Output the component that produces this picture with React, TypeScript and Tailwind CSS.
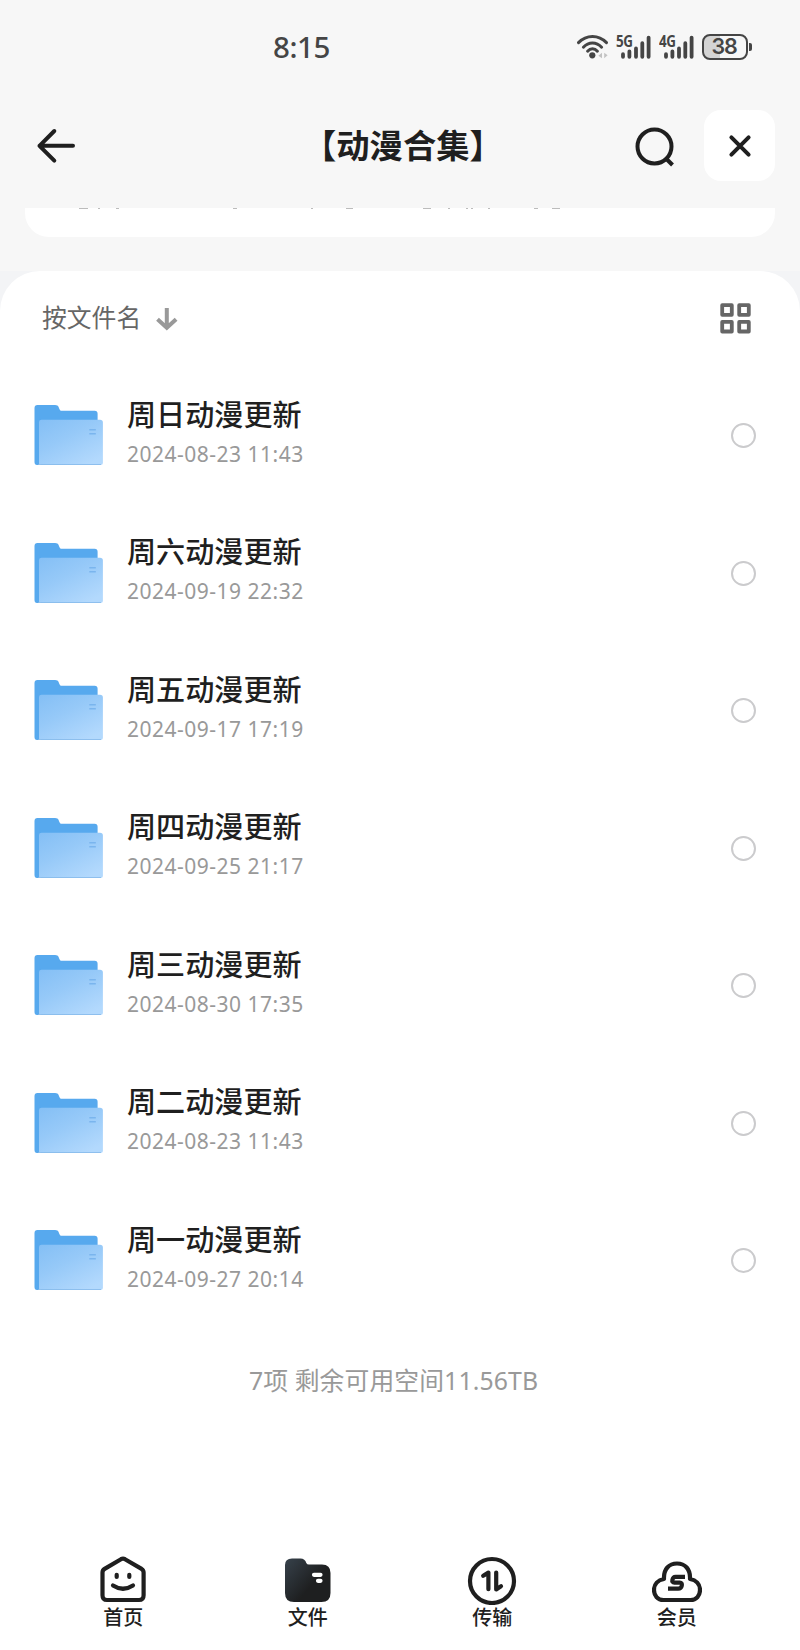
import React from "react";

const rows = [
  { name: "周日动漫更新", date: "2024-08-23 11:43" },
  { name: "周六动漫更新", date: "2024-09-19 22:32" },
  { name: "周五动漫更新", date: "2024-09-17 17:19" },
  { name: "周四动漫更新", date: "2024-09-25 21:17" },
  { name: "周三动漫更新", date: "2024-08-30 17:35" },
  { name: "周二动漫更新", date: "2024-08-23 11:43" },
  { name: "周一动漫更新", date: "2024-09-27 20:14" },
];

function Wifi() {
  return (
    <svg className="h-[26px] w-[34px] shrink-0" viewBox="0 0 34 26" fill="none" stroke="#454545" strokeWidth="3" strokeLinecap="round">
      <path d="M2.5 8.6C10.5 0.4 22.5 0.4 30.5 8.6" />
      <path d="M7.4 13.2C12.6 7.6 20.4 7.6 25.6 13.2" />
      <path d="M11.6 17.2C14.4 14 18.6 14 21.4 17.2" />
      <circle cx="16.3" cy="21.3" r="3.1" fill="#454545" stroke="none" />
      <path d="M26 18.8v5.4l-3.6-2.5zM28.2 18.8v5.4l3.4-3z" fill="#c2c2c2" stroke="none" />
    </svg>
  );
}

function Signal({ label }: { label: string }) {
  return (
    <div className="relative h-[26px] w-[36px] shrink-0">
      <svg className="h-[26px] w-[36px]" viewBox="0 0 36 26" stroke="#454545" strokeWidth="3.8" strokeLinecap="round">
        <path d="M7 20.2v2.6M13.4 17.4v5.4M20 14.4v8.4M26.3 9.2v13.6M32.6 3.6v19.2" />
      </svg>
      <span className="absolute left-0 top-0 origin-left scale-x-[0.84] font-['Noto_Sans'] text-[16px] font-bold leading-[15px] text-[#454545] tracking-[-0.4px]">{label}</span>
    </div>
  );
}

function Folder() {
  return (
    <svg className="mb-px h-[62px] w-[70px] shrink-0" viewBox="0 0 70 62">
      <defs>
        <linearGradient id="front" x1="0" y1="0" x2="0.75" y2="1">
          <stop offset="0" stopColor="#84bff5" />
          <stop offset="0.45" stopColor="#96c9f8" />
          <stop offset="1" stopColor="#b3d9fd" />
        </linearGradient>
      </defs>
      <path d="M0.5 4Q0.5 1 3.5 1H21C23 1 24.2 1.8 24.8 3.4L25.4 5C25.9 6.3 26.6 6.8 28 6.8H60.6Q63.6 6.8 63.6 9.8V50H10L5 61H3Q0.5 61 0.5 58Z" fill="#57a9ee" />
      <path d="M5 18Q5 15.8 7.5 15.8H66Q68.9 15.8 68.9 18.5V58.5Q68.9 61 66.4 61H7.5Q5 61 5 58.5Z" fill="url(#front)" />
      <path d="M4 60.5H67" stroke="#84b9ea" strokeWidth="0.8" />
      <path d="M55.3 25.8H61.8M55.3 29.8H61.8" stroke="#7ab5ee" strokeWidth="1.6" />
    </svg>
  );
}

const tabs = [
  {
    label: "首页",
    icon: (
      <svg className="h-[50px] w-[50px]" viewBox="0 0 50 50" fill="none" stroke="#1f1f1f" strokeWidth="4.2" strokeLinecap="round" strokeLinejoin="round">
        <path d="M4.5 17.6Q4.5 15.2 6.6 13.9L23 4.2Q25 3.1 27 4.2L43.6 13.9Q45.6 15.2 45.6 17.6V40.2Q45.6 45 41 45H9Q4.5 45 4.5 40.2Z" />
        <path d="M18.7 19.8v2.2M31.3 19.8v2.2" />
        <path d="M15 30.5Q25 37 35 30.5" />
      </svg>
    ),
  },
  {
    label: "文件",
    icon: (
      <svg className="h-[50px] w-[50px]" viewBox="0 0 50 50">
        <defs>
          <linearGradient id="dark" x1="0" y1="0.1" x2="0.6" y2="0.6">
            <stop offset="0" stopColor="#353f48" />
            <stop offset="1" stopColor="#1e1f20" />
          </linearGradient>
        </defs>
        <path d="M2 10Q2 3.5 9 3.5H17.5Q22 3.5 23.3 8Q24 9.5 26 9.5H39Q47.5 9.5 47.5 18V38Q47.5 47 38.5 47H11Q2 47 2 38Z" fill="url(#dark)" />
        <path d="M31 19.8h6.5M35 25.8h2.5" stroke="#fff" strokeWidth="4.2" strokeLinecap="round" />
      </svg>
    ),
  },
  {
    label: "传输",
    icon: (
      <svg className="h-[50px] w-[50px]" viewBox="0 0 50 50" fill="none" stroke="#1f1f1f" strokeWidth="4.2" strokeLinecap="round" strokeLinejoin="round">
        <circle cx="25" cy="26" r="22" />
        <path d="M16.2 20.8L21.4 17.6V34.2" />
        <path d="M29.2 17.5V34.4L34 31.2" />
      </svg>
    ),
  },
  {
    label: "会员",
    icon: (
      <svg className="h-[50px] w-[50px]" viewBox="0 0 50 50" fill="none" stroke="#1f1f1f" strokeWidth="4.2" strokeLinejoin="round">
        <path d="M11.5 45C5.5 45 2 40.5 2 35C2 29 6 25 12 24C11.5 14 17 8.5 25 8.5C33 8.5 38.5 14 38 24C44 25 48 29 48 35C48 40.5 44.5 45 38.5 45Z" />
        <path d="M33 21.8H23.5Q21 21.8 20.4 24.8Q19.8 27.6 22.4 27.6H27.8Q30.4 27.6 29.8 30.6Q29.2 33.6 26.2 33.6H16" />
      </svg>
    ),
  },
];

export default function App() {
  return (
    <div className="flex h-[1650px] w-[800px] flex-col overflow-hidden bg-[#f7f7f7] font-['Inter','Noto_Sans_CJK_SC',sans-serif] text-[#1f1f1f]">
      <div className="flex h-[92px] items-start pl-[273px] pr-[48px] pt-[34px]">
        <span className="w-[60px] pt-px font-['Noto_Sans'] text-[29.5px] font-medium leading-[24px] tracking-[-0.4px] text-[#454545]">8:15</span>
        <div className="ml-auto flex items-start">
          <Wifi />
          <div className="ml-[6px]"><Signal label="5G" /></div>
          <div className="ml-[7px]"><Signal label="4G" /></div>
          <div className="ml-[7px] flex items-center">
            <div className="flex h-[26px] w-[46px] items-center justify-center rounded-[8px] border-2 border-[#454545] bg-[linear-gradient(90deg,#d4d4d4_38%,#f7f7f7_38%)] pr-[2px] font-['Inter'] text-[21.5px] font-semibold leading-none tracking-[-1.2px] text-[#454545]">38</div>
            <div className="ml-px h-[8px] w-[3px] rounded-r-[2px] bg-[#454545]" />
          </div>
        </div>
      </div>

      <div className="flex h-[116px] items-start pl-[36px] pr-[25px] pt-[18px]">
        <svg className="mt-[17px] h-[37px] w-[40px]" viewBox="0 0 40 37" fill="none" stroke="#1f1f1f" strokeWidth="4" strokeLinecap="round" strokeLinejoin="round">
          <path d="M37 18.8H3.5M18.3 4L3.5 18.8L18.3 33.6" />
        </svg>
        <h1 className="ml-[227px] mt-[10px] whitespace-nowrap font-['Noto_Sans_CJK_SC',sans-serif] text-[33.3px] font-bold leading-[48px]">【动漫合集】</h1>
        <svg className="ml-auto mr-[28px] mt-[16px] h-[42px] w-[42px]" viewBox="0 0 42 42" fill="none" stroke="#1f1f1f" strokeWidth="4">
          <circle cx="20.5" cy="20.5" r="17" />
          <path d="M32 32.5L38.5 39" />
        </svg>
        <div className="flex h-[71px] w-[71px] items-center justify-center rounded-[17px] bg-white">
          <svg className="h-[24px] w-[24px]" viewBox="0 0 24 24" stroke="#1f1f1f" strokeWidth="4" strokeLinecap="round">
            <path d="M3.4 3.4L20.6 20.6M20.6 3.4L3.4 20.6" />
          </svg>
        </div>
      </div>

      <div className="mx-[25px] h-[29px] shrink-0 rounded-b-[24px] bg-white">
        <svg className="h-[2px] w-[750px]" viewBox="0 0 750 2" stroke="#bcbcbc" strokeWidth="1">
          <path d="M54 .5h9M73 .5h2M91 .5h3M208 .5h4M286 .5h2M321 .5h7M398 .5h8M423 .5h2M441 .5h2M446 .5h2M463 .5h2M509 .5h4M527 .5h8" />
        </svg>
      </div>
      <div className="h-[34px] shrink-0" />

      <div className="grow bg-[#f3f4f6]">
        <main className="flex h-full flex-col rounded-t-[40px] bg-white">
          <div className="flex h-[96px] shrink-0 items-start pl-[42px] pr-[48px] pt-[29px]">
            <span className="text-[24.8px] leading-[36px] text-[#666]">按文件名</span>
            <svg className="ml-[15px] mt-[7px] h-[25px] w-[22px]" viewBox="0 0 22 25" fill="none" stroke="#999" strokeWidth="4">
              <path d="M10.8 1V21M1.5 12.2L10.8 20.8L20.1 12.2" />
            </svg>
            <svg className="ml-auto mt-[3px] h-[32px] w-[32px]" viewBox="0 0 32 32" fill="none" stroke="#666" strokeWidth="3.8" strokeLinejoin="round">
              <path d="M2.2 2.2h9.6v9.6H2.2zM19.2 2.2h9.6v9.6H19.2zM2.2 18.9h9.6v9.6H2.2zM19.2 18.9h9.6v9.6H19.2z" />
            </svg>
          </div>
          <ul className="shrink-0">
            {rows.map((r) => (
              <li key={r.name} className="flex h-[137.5px] items-center pl-[34px] pr-[44px]">
                <Folder />
                <div className="ml-[23px] flex flex-col pb-[9px]">
                  <span className="text-[29.1px] font-medium leading-[42px]">{r.name}</span>
                  <span className="mt-[3px] whitespace-nowrap font-['Noto_Sans'] text-[21px] leading-[28px] tracking-[0.5px] text-[#999]">{r.date}</span>
                </div>
                <span className="ml-auto h-[25px] w-[25px] rounded-full border-[2.4px] border-[#cbcbcd]" />
              </li>
            ))}
          </ul>
          <p className="mt-[32px] pl-[249px] font-['Noto_Sans','Noto_Sans_CJK_SC',sans-serif] text-[24.8px] leading-[36px] tracking-[0.1px] text-[#999]">7项 剩余可用空间11.56TB</p>
          <nav className="mt-auto flex h-[95px] shrink-0 px-[31px]">
            {tabs.map((t) => (
              <div key={t.label} className="flex flex-1 flex-col items-center">
                {t.icon}
                <span className="mt-[-1px] text-[20px] font-medium leading-[28px]">{t.label}</span>
              </div>
            ))}
          </nav>
        </main>
      </div>
    </div>
  );
}
